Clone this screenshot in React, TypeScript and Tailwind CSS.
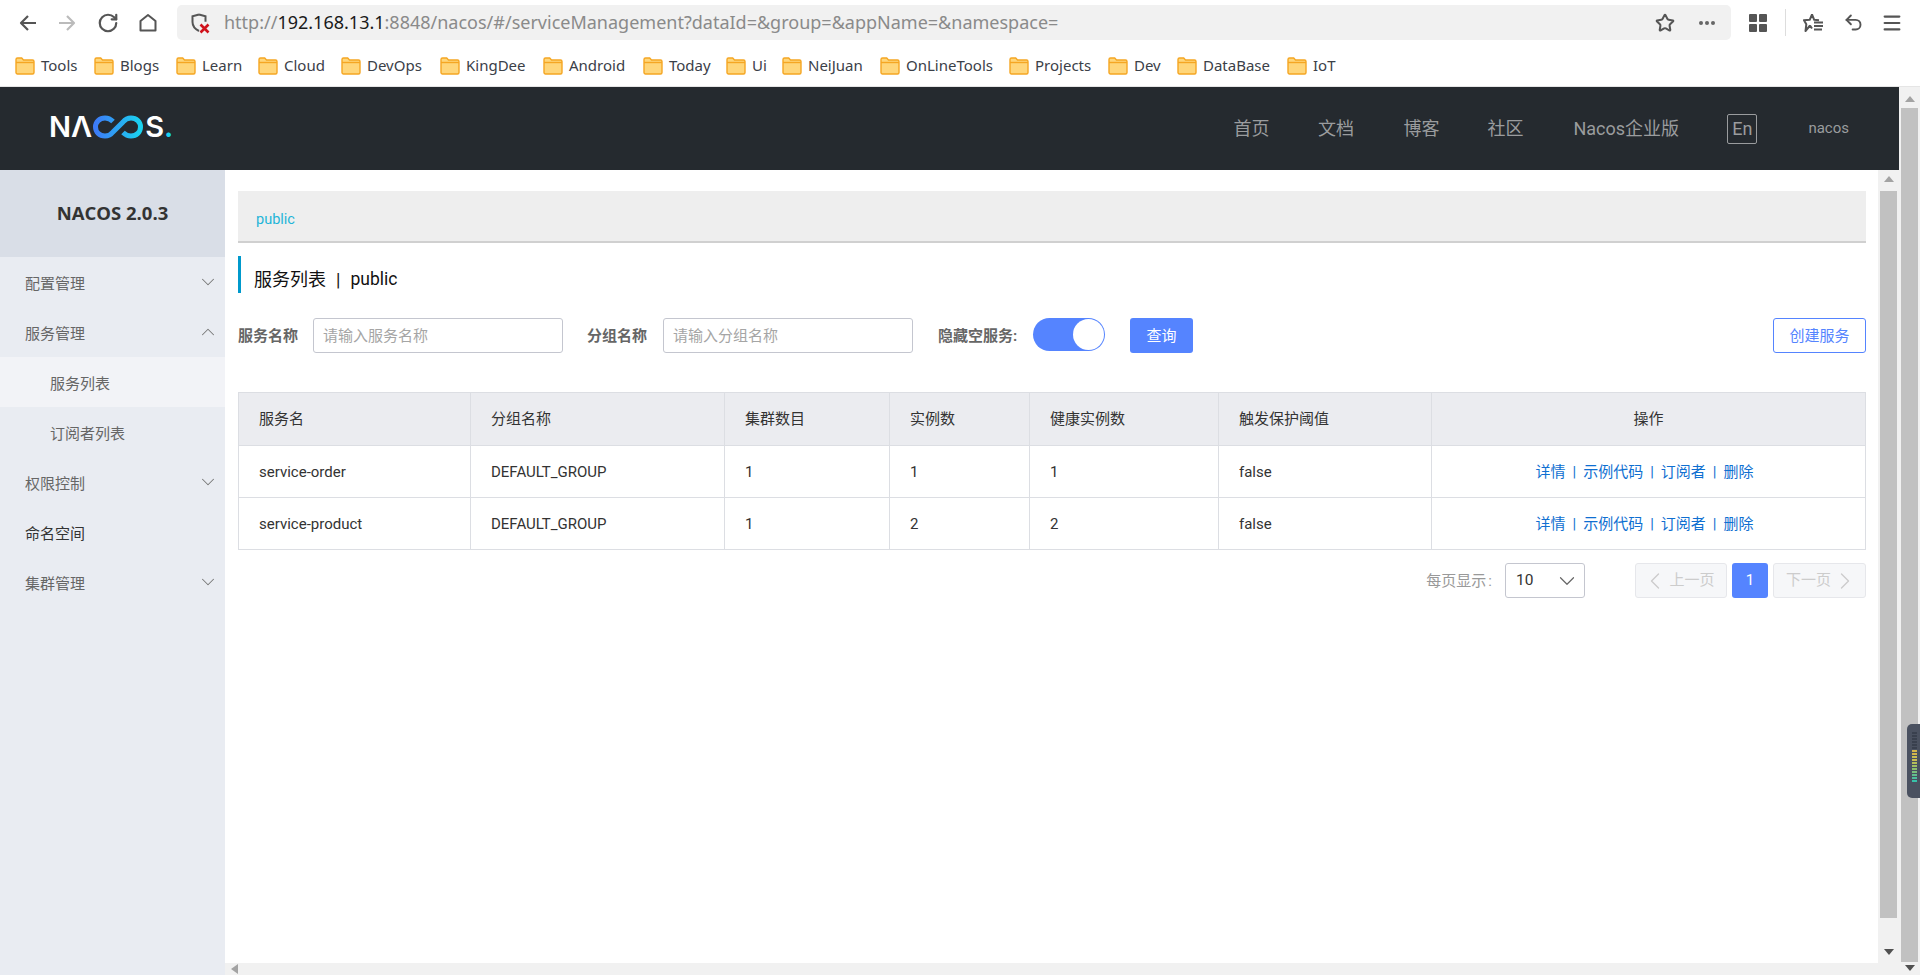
import React from 'react';
import { RotateCw, Star, ChevronDown, ChevronUp, ChevronLeft, ChevronRight, Undo2, Menu } from 'lucide-react';

const cjk = "font-['Roboto','Noto_Sans_CJK_SC',sans-serif]";

const bookmarks = [
  { name: 'Tools', w: 'w-[79px]' },
  { name: 'Blogs', w: 'w-[82px]' },
  { name: 'Learn', w: 'w-[82px]' },
  { name: 'Cloud', w: 'w-[83px]' },
  { name: 'DevOps', w: 'w-[99px]' },
  { name: 'KingDee', w: 'w-[103px]' },
  { name: 'Android', w: 'w-[100px]' },
  { name: 'Today', w: 'w-[83px]' },
  { name: 'Ui', w: 'w-[56px]' },
  { name: 'NeiJuan', w: 'w-[98px]' },
  { name: 'OnLineTools', w: 'w-[129px]' },
  { name: 'Projects', w: 'w-[99px]' },
  { name: 'Dev', w: 'w-[69px]' },
  { name: 'DataBase', w: 'w-[110px]' },
  { name: 'IoT', w: 'w-[60px]' },
];

const menu = [
  { label: '配置管理', arrow: 'down', cls: 'text-[#666]' },
  { label: '服务管理', arrow: 'up', cls: 'text-[#666]' },
  { label: '服务列表', sub: true, cls: 'text-[#666] bg-[#f2f3f7]' },
  { label: '订阅者列表', sub: true, cls: 'text-[#666]' },
  { label: '权限控制', arrow: 'down', cls: 'text-[#666]' },
  { label: '命名空间', cls: 'text-[#333]' },
  { label: '集群管理', arrow: 'down', cls: 'text-[#666]' },
];

const columns = [
  { title: '服务名', w: 'w-[232px]' },
  { title: '分组名称', w: 'w-[254px]' },
  { title: '集群数目', w: 'w-[165px]' },
  { title: '实例数', w: 'w-[140px]' },
  { title: '健康实例数', w: 'w-[189px]' },
  { title: '触发保护阈值', w: 'w-[213px]' },
];

const rows = [
  ['service-order', 'DEFAULT_GROUP', '1', '1', '1', 'false'],
  ['service-product', 'DEFAULT_GROUP', '1', '2', '2', 'false'],
];

const actions = ['详情', '示例代码', '订阅者', '删除'];

const FolderIcon = () => (
  <svg width="20" height="18" viewBox="0 0 20 18" className="shrink-0">
    <path d="M1 15.5V2.5A1.5 1.5 0 0 1 2.5 1h4.2l1.8 2h9A1.5 1.5 0 0 1 19 4.5v11a1.5 1.5 0 0 1-1.5 1.5h-15A1.5 1.5 0 0 1 1 15.5z" fill="#ffd67a" stroke="#f5a623" strokeWidth="1.4" />
    <path d="M1 5.5h18" stroke="#f5a623" strokeWidth="1.4" />
  </svg>
);

const TrackArrow = ({ up }: { up?: boolean }) => (
  <svg width="10" height="6" viewBox="0 0 10 6">
    <path d={up ? 'M5 0l5 6H0z' : 'M0 0h10L5 6z'} fill={up ? '#a3a3a3' : '#505050'} />
  </svg>
);

const NavArrow = ({ color, flip, className }: { color: string; flip?: boolean; className?: string }) => (
  <svg width="18" height="18" viewBox="0 0 18 18" className={`${flip ? '-scale-x-100' : ''} ${className ?? ''}`}>
    <path d="M17 9H2M9 2L2 9l7 7" fill="none" stroke={color} strokeWidth="2.200" strokeLinejoin="round" />
  </svg>
);

const Toolbar = () => (
  <div className="h-[45px] flex items-center bg-white pl-[19px] pr-[17px]">
    <NavArrow color="#555" />
    <NavArrow color="#bbb" flip className="ml-[21px]" />
    <RotateCw size={22} strokeWidth={2.4} className="text-[#555] ml-[21px]" />
    <svg width="20" height="20" viewBox="0 0 20 20" className="ml-[19px]">
      <path d="M2.500 17.500V8L10 2l7.500 6v9.500z" fill="none" stroke="#555" strokeWidth="2" strokeLinejoin="round" />
    </svg>
    <div className="ml-[19px] w-[1554px] h-[35px] rounded-[5px] bg-[#f1f1f1] flex items-center pl-[14px] pr-[16px]">
      <svg width="20" height="22" viewBox="0 0 20 22" className="shrink-0">
        <path d="M8 2.500l6.500 1.800v5.500M8 2.500L1.500 4.300v5.700c0 4 2.500 7 6.500 9" fill="none" stroke="#555" strokeWidth="2" />
        <path d="M9.500 12.500l8 8M17.500 12.500l-8 8" stroke="#d0121b" strokeWidth="2.600" />
      </svg>
      <div className="ml-[13px] flex-1 text-[18px] leading-none text-[#8a8a8a] font-['Noto_Sans',sans-serif] pb-[2px]">
        http://<span className="text-[#1a1a1a]">192.168.13.1</span>:8848/nacos/#/serviceManagement?dataId=&amp;group=&amp;appName=&amp;namespace=
      </div>
      <Star size={20} strokeWidth={2.4} className="text-[#555]" />
      <div className="ml-[24px] flex gap-[2px]">
        <span className="w-[4px] h-[4px] rounded-full bg-[#666]" />
        <span className="w-[4px] h-[4px] rounded-full bg-[#666]" />
        <span className="w-[4px] h-[4px] rounded-full bg-[#666]" />
      </div>
    </div>
    <div className="ml-[18px] grid grid-cols-2 gap-[2px]">
      <span className="w-[8px] h-[8px] rounded-[1px] bg-[#555]" />
      <span className="w-[8px] h-[8px] rounded-[1px] bg-[#555]" />
      <span className="w-[8px] h-[8px] rounded-[1px] bg-[#555]" />
      <span className="w-[8px] h-[8px] rounded-[1px] bg-[#555]" />
    </div>
    <div className="ml-[18px] w-px h-[27px] bg-[#ddd]" />
    <svg width="22" height="20" viewBox="0 0 22 20" className="ml-[17px]">
      <path d="M9 1.500l2.200 5.300 4.800.400M7 12.500l-4.500 5.500.800-6.700L1 7.200l5.700-.400L9 1.500M7 12.500l2 3" fill="none" stroke="#555" strokeWidth="2" strokeLinejoin="round" />
      <path d="M11 9.500h9M11 13h9M11 16.500h8" stroke="#555" strokeWidth="2" />
    </svg>
    <Undo2 size={21} strokeWidth={2.2} className="text-[#555] ml-[18px]" />
    <Menu size={22} strokeWidth={2.4} className="text-[#555] ml-[17px]" />
  </div>
);

const Bookmarks = () => (
  <div className="h-[42px] flex items-center bg-white pl-[15px] border-b border-[#e5e5e5]">
    {bookmarks.map((b) => (
      <div key={b.name} className={`${b.w} flex items-center gap-[6px] shrink-0`}>
        <FolderIcon />
        <span className="text-[15px] text-[#3b4048] font-['Noto_Sans',sans-serif] leading-none">{b.name}</span>
      </div>
    ))}
  </div>
);

const Header = () => (
  <div className="h-[83px] bg-[#252a2f] flex items-center shrink-0 pl-[49px]">
    <div className="flex items-center h-[24px] mb-[4px] text-white font-['Inter',sans-serif] font-semibold text-[29px] leading-none">
      <span>NΛ</span>
      <svg width="53" height="24" viewBox="0 0 53 24" className="shrink-0">
        <defs>
          <linearGradient id="inf" x1="0" x2="1" y1="0" y2="0">
            <stop offset="0" stopColor="#3d7bf7" />
            <stop offset="1" stopColor="#1ad2ef" />
          </linearGradient>
        </defs>
        <path d="M21 6.500C18.500 4 16 3 13 3 7.500 3 3.500 7 3.500 12S7.500 21 13 21c3.500 0 6-1.500 8-4l10-10c2-2.500 4.500-4 8-4 5.500 0 9.500 4 9.500 9s-4 9-9.500 9c-3 0-5.500-1-8-3.500" fill="none" stroke="url(#inf)" strokeWidth="5" />
      </svg>
      <span>S</span>
      <span className="text-[#1ad2ef]">.</span>
    </div>
    <nav className={`ml-auto flex items-center text-[18px] text-[#9a9c9e] ${cjk}`}>
      <span className="w-[84.500px]">首页</span>
      <span className="w-[85.500px]">文档</span>
      <span className="w-[84px]">博客</span>
      <span className="w-[86px]">社区</span>
      <span className="w-[154px]">Nacos企业版</span>
      <span className="w-[30px] h-[30px] border border-[#9a9c9e] rounded-[2px] flex items-center justify-center">En</span>
      <span className="ml-[51px] mr-[50px] text-[15px]">nacos</span>
    </nav>
  </div>
);

const Sidebar = () => (
  <aside className={`w-[225px] shrink-0 bg-[#e9ecf2] ${cjk}`}>
    <div className="h-[87px] bg-[#d9dee7] flex items-center justify-center pb-[1px] text-[18.500px] font-bold text-[#333] font-['Open_Sans',sans-serif]">
      NACOS 2.0.3
    </div>
    {menu.map((m) => (
      <div key={m.label} className={`h-[50px] flex items-center text-[15px] ${m.sub ? 'pl-[50px]' : 'pl-[25px]'} pr-[6px] ${m.cls}`}>
        <span className="mt-[5px]">{m.label}</span>
        {m.arrow === 'down' && <ChevronDown size={22} strokeWidth={1.1} className="ml-auto text-[#777]" />}
        {m.arrow === 'up' && <ChevronUp size={22} strokeWidth={1.1} className="ml-auto text-[#777]" />}
      </div>
    ))}
  </aside>
);

const SearchInput = ({ placeholder, className }: { placeholder: string; className: string }) => (
  <div className={`h-[35px] w-[250px] border border-[#c4c6cf] rounded-[3px] bg-white flex items-center pl-[9px] pt-[2px] text-[15px] text-[#a5a5a5] ${className}`}>
    {placeholder}
  </div>
);

const Content = () => (
  <div className={`flex-1 min-w-0 pl-[13px] pr-[12px] pt-[21px] text-[15px] text-[#333] ${cjk}`}>
    <div className="h-[52px] bg-[#eeeeee] border-b-2 border-[#d0d0d0] pl-[18px] pt-[19px] text-[14.500px] leading-[20px] text-[#1fb5d8]">public</div>
    <div className="mt-[13px] h-[37px] border-l-[3px] border-[#0099cc] pl-[13px] pt-[9px] flex items-center text-[18px] text-[#111]">
      服务列表<span className="mx-[10px]">|</span><span className="text-[17.500px]">public</span>
    </div>
    <div className="mt-[25px] flex items-center">
      <span className="font-bold text-[#666] w-[60px] whitespace-nowrap pt-[2px]">服务名称</span>
      <SearchInput placeholder="请输入服务名称" className="ml-[15px]" />
      <span className="ml-[24px] font-bold text-[#666] w-[60px] whitespace-nowrap pt-[2px]">分组名称</span>
      <SearchInput placeholder="请输入分组名称" className="ml-[16px]" />
      <span className="ml-[25px] font-bold text-[#666] whitespace-nowrap w-[80px] pt-[2px]">隐藏空服务:</span>
      <div className="ml-[15px] w-[72px] h-[33px] rounded-full bg-[#5584ff] flex items-center justify-end pr-[1px] -mt-[2px]">
        <span className="w-[31px] h-[31px] rounded-full bg-white" />
      </div>
      <button className="ml-[25px] w-[63px] h-[35px] rounded-[3px] bg-[#5584ff] text-white text-[15px] pt-[1px]">查询</button>
      <button className="ml-auto w-[93px] h-[35px] rounded-[3px] border border-[#5584ff] text-[#5584ff] text-[15px] pt-[1px]">创建服务</button>
    </div>
    <table className="mt-[39px] w-full table-fixed border-collapse border border-[#dcdee3]">
      <thead>
        <tr className="h-[53px] bg-[#ebecf0]">
          {columns.map((c) => (
            <th key={c.title} className={`${c.w} border border-[#dcdee3] pl-[20px] text-left font-normal`}>{c.title}</th>
          ))}
          <th className="border border-[#dcdee3] font-normal">操作</th>
        </tr>
      </thead>
      <tbody>
        {rows.map((row) => (
          <tr key={row[0]} className="h-[52px]">
            {row.map((v, i) => (
              <td key={i} className="border border-[#dcdee3] pl-[20px] pt-[2px]">{v}</td>
            ))}
            <td className="border border-[#dcdee3] text-center text-[#0f6fd1] pt-[2px] pr-[8px]">
              {actions.map((a, i) => (
                <React.Fragment key={a}>
                  {i > 0 && <span className="mx-[7px]">|</span>}
                  <span>{a}</span>
                </React.Fragment>
              ))}
            </td>
          </tr>
        ))}
      </tbody>
    </table>
    <div className="mt-[13px] flex items-center justify-end">
      <span className="text-[#999] pt-[1px]">每页显示<span className="ml-[2px]">:</span></span>
      <div className="ml-[13px] w-[80px] h-[35px] border border-[#c4c6cf] rounded-[3px] flex items-center pl-[10px] pr-[4px] text-[#333] text-[15.500px]">
        10
        <ChevronDown size={26} strokeWidth={1.1} className="ml-auto text-[#666]" />
      </div>
      <button className="ml-[50px] w-[92px] h-[35px] rounded-[3px] border border-[#e6e7eb] bg-[#f6f7f9] text-[#ccc] flex items-center justify-center">
        <ChevronLeft size={28} strokeWidth={1.2} className="-ml-[6px]" />上一页
      </button>
      <button className="ml-[5px] w-[36px] h-[35px] rounded-[3px] bg-[#5584ff] text-white">1</button>
      <button className="ml-[5px] w-[93px] h-[35px] rounded-[3px] border border-[#e6e7eb] bg-[#f6f7f9] text-[#ccc] flex items-center justify-center">
        下一页<ChevronRight size={28} strokeWidth={1.2} className="-mr-[6px]" />
      </button>
    </div>
  </div>
);

export default function App() {
  return (
    <div className="relative w-[1920px] h-[975px] flex flex-col overflow-hidden bg-white">
      <Toolbar />
      <Bookmarks />
      <div className="flex flex-1 min-h-0">
        <div className="w-[1899px] flex flex-col">
          <Header />
          <div className="flex flex-1 min-h-0">
            <Sidebar />
            <div className="flex-1 flex flex-col min-w-0">
              <div className="flex flex-1 min-h-0">
                <Content />
                {/* inner scrollbar */}
                <div className="w-[21px] shrink-0 bg-[#f1f1f1] flex flex-col items-center pt-[6px] pb-[8px]">
                  <TrackArrow up />
                  <div className="mt-[9px] w-[17px] h-[727px] bg-[#c1c1c1]" />
                  <div className="mt-auto"><TrackArrow /></div>
                </div>
              </div>
              <div className="h-[12px] bg-[#f1f1f1] flex items-center pl-[6px]">
                <svg width="7" height="10" viewBox="0 0 7 10"><path d="M0 5l7-5v10z" fill="#a3a3a3" /></svg>
              </div>
            </div>
          </div>
        </div>
        {/* outer scrollbar */}
        <div className="w-[21px] bg-[#f1f1f1] flex flex-col items-center pt-[9px] pb-[4px]">
          <TrackArrow up />
          <div className="mt-[6px] w-[17px] flex-1 bg-[#c1c1c1]" />
          <div className="mt-[3px]"><TrackArrow /></div>
        </div>
      </div>
      {/* level meter widget docked over the right edge */}
      <div className="absolute right-0 top-[724px] w-[13px] h-[74px] rounded-l-[5px] bg-[#4a5160] flex flex-col gap-[1px] pl-[5px] pr-[3px] pt-[8px]">
        <span className="h-[2px] bg-[#39404e]" /><span className="h-[2px] bg-[#39404e]" /><span className="h-[2px] bg-[#39404e]" />
        <span className="h-[2px] bg-[#39404e]" /><span className="h-[2px] bg-[#39404e]" /><span className="h-[2px] bg-[#39404e]" />
        <span className="h-[2px] bg-[#d4b54a]" /><span className="h-[2px] bg-[#d4b54a]" /><span className="h-[2px] bg-[#c9bd52]" />
        <span className="h-[2px] bg-[#c9bd52]" /><span className="h-[2px] bg-[#b5bf5a]" /><span className="h-[2px] bg-[#a0bf62]" />
        <span className="h-[2px] bg-[#8cc06e]" /><span className="h-[2px] bg-[#78c07c]" /><span className="h-[2px] bg-[#62c08c]" />
        <span className="h-[2px] bg-[#4cc09c]" /><span className="h-[2px] bg-[#38c2aa]" />
      </div>
    </div>
  );
}
